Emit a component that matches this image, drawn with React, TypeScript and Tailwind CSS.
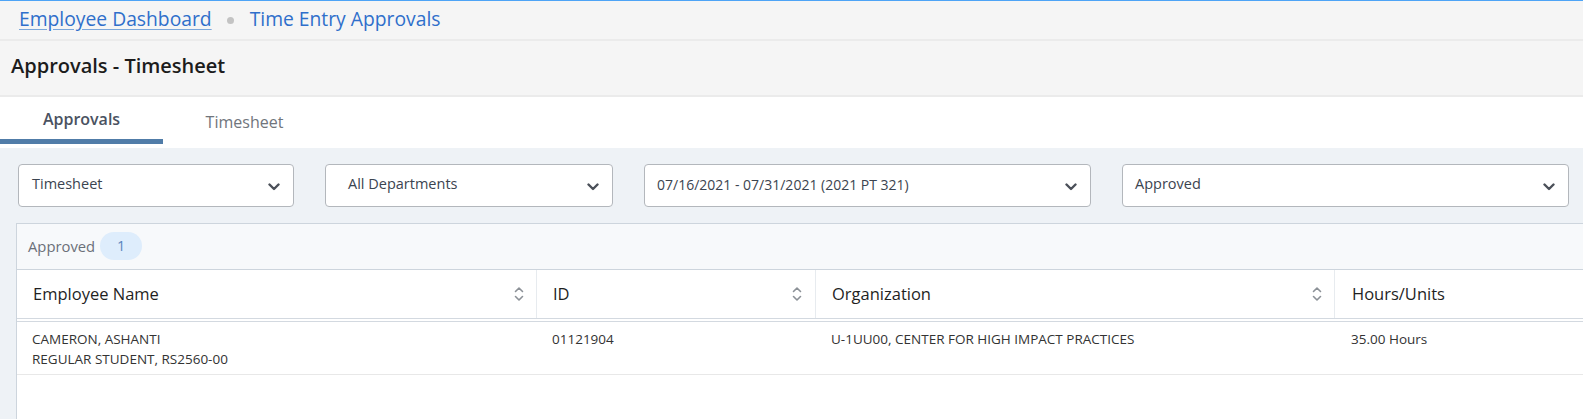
import React from "react";

function Chevron() {
  return (
    <svg width="12" height="8" viewBox="0 0 12 8" className="shrink-0">
      <polyline points="1.5,1.5 6,6 10.5,1.5" fill="none" stroke="#4b5059" strokeWidth="2.4" strokeLinecap="round" strokeLinejoin="round" />
    </svg>
  );
}

function SortIcon() {
  return (
    <svg width="10" height="16" viewBox="0 0 10 16" className="shrink-0">
      <polyline points="1.5,5.5 5,2 8.5,5.5" fill="none" stroke="#8c9197" strokeWidth="1.6" strokeLinecap="round" strokeLinejoin="round" />
      <polyline points="1.5,10.5 5,14 8.5,10.5" fill="none" stroke="#8c9197" strokeWidth="1.6" strokeLinecap="round" strokeLinejoin="round" />
    </svg>
  );
}

function Select({ label, w, pl, ts }: { label: string; w: string; pl: string; ts: string }) {
  return (
    <div className={`${w} ${pl} ${ts} h-[43px] shrink-0 bg-white border border-[#b3b7bc] rounded-[4px] flex items-center justify-between pr-[13px] pb-[3px] text-[#3b4450]`}>
      <span>{label}</span>
      <span className="pt-[5px]"><Chevron /></span>
    </div>
  );
}

export default function App() {
  return (
    <div className="w-[1583px] h-[419px] overflow-hidden bg-[#eef2f6] font-['Open_Sans',sans-serif]">
      <div className="h-px bg-[#4ea4f6]" />
      {/* breadcrumb */}
      <div className="h-[40px] bg-[#f5f5f5] border-b-2 border-[#ebebeb] flex items-center pl-[19px] pb-[2px] text-[19.3px] text-[#2f6fcb]">
        <span className="underline decoration-[#7aa6da] underline-offset-[3px]">Employee Dashboard</span>
        <span className="w-[7px] h-[7px] rounded-full bg-[#c3c3c3] ml-[15px] mr-[16px] mt-[3px]" />
        <span>Time Entry Approvals</span>
      </div>
      {/* title */}
      <div className="h-[56px] bg-[#f5f5f5] border-b-2 border-[#ebebeb] flex items-center pl-[11px] pb-[4px] text-[20px] font-semibold text-[#1c1c1c]">
        Approvals - Timesheet
      </div>
      {/* tabs */}
      <div className="h-[51px] bg-white flex items-end">
        <div className="w-[163px] h-[47px] flex items-center justify-center border-b-[5px] border-[#507ca8] mb-[4px] text-[16px] font-semibold text-[#4a5261] pt-[2px]">
          Approvals
        </div>
        <div className="w-[163px] h-[47px] flex items-center justify-center mb-[4px] text-[16px] text-[#70757c] pt-[2px]">
          Timesheet
        </div>
      </div>
      {/* filters */}
      <div className="flex gap-[31px] pl-[18px] pt-[16px]">
        <Select label="Timesheet" w="w-[276px]" pl="pl-[13px]" ts="text-[14.5px]" />
        <Select label="All Departments" w="w-[288px]" pl="pl-[22px]" ts="text-[14.5px]" />
        <Select label="07/16/2021 - 07/31/2021 (2021 PT 321)" w="w-[447px]" pl="pl-[12px]" ts="text-[14px]" />
        <Select label="Approved" w="w-[447px]" pl="pl-[12px]" ts="text-[14.5px]" />
      </div>
      {/* panel */}
      <div className="ml-[16px] mt-[16px] w-[1600px] border-l border-t border-[#cdd5dd] bg-white">
        <div className="h-[46px] bg-[#f7f9fb] border-b border-[#cdd5dd] flex items-center pl-[11px] pb-[1px]">
          <span className="text-[14.8px] text-[#6b7079]">Approved</span>
          <span className="ml-[5px] w-[42px] h-[28px] rounded-full bg-[#deedfc] text-[#5a84bd] text-[14.5px] flex items-center justify-center">1</span>
        </div>
        {/* header */}
        <div className="flex h-[52px] border-b-4 border-double border-[#d3d9e0] text-[16.5px] text-[#1f1f1f]">
          <div className="w-[520px] flex items-center justify-between pl-[16px] pr-[12px] border-r border-[#e7ebef]">
            <span>Employee Name</span>
            <SortIcon />
          </div>
          <div className="w-[279px] flex items-center justify-between pl-[16px] pr-[13px] border-r border-[#e7ebef]">
            <span>ID</span>
            <SortIcon />
          </div>
          <div className="w-[519px] flex items-center justify-between pl-[16px] pr-[12px] border-r border-[#e7ebef]">
            <span>Organization</span>
            <SortIcon />
          </div>
          <div className="flex-1 flex items-center pl-[17px]">
            <span>Hours/Units</span>
          </div>
        </div>
        {/* row */}
        <div className="flex h-[53px] border-b border-[#e8e8e8] text-[13.5px] text-[#333333] leading-[20px] pt-[7px]">
          <div className="w-[520px] pl-[15px]">
            <div>CAMERON, ASHANTI</div>
            <div>REGULAR STUDENT, RS2560-00</div>
          </div>
          <div className="w-[279px] pl-[15px]">01121904</div>
          <div className="w-[519px] pl-[15px]">U-1UU00, CENTER FOR HIGH IMPACT PRACTICES</div>
          <div className="flex-1 pl-[16px]">35.00 Hours</div>
        </div>
        <div className="h-[60px] bg-white" />
      </div>
    </div>
  );
}
